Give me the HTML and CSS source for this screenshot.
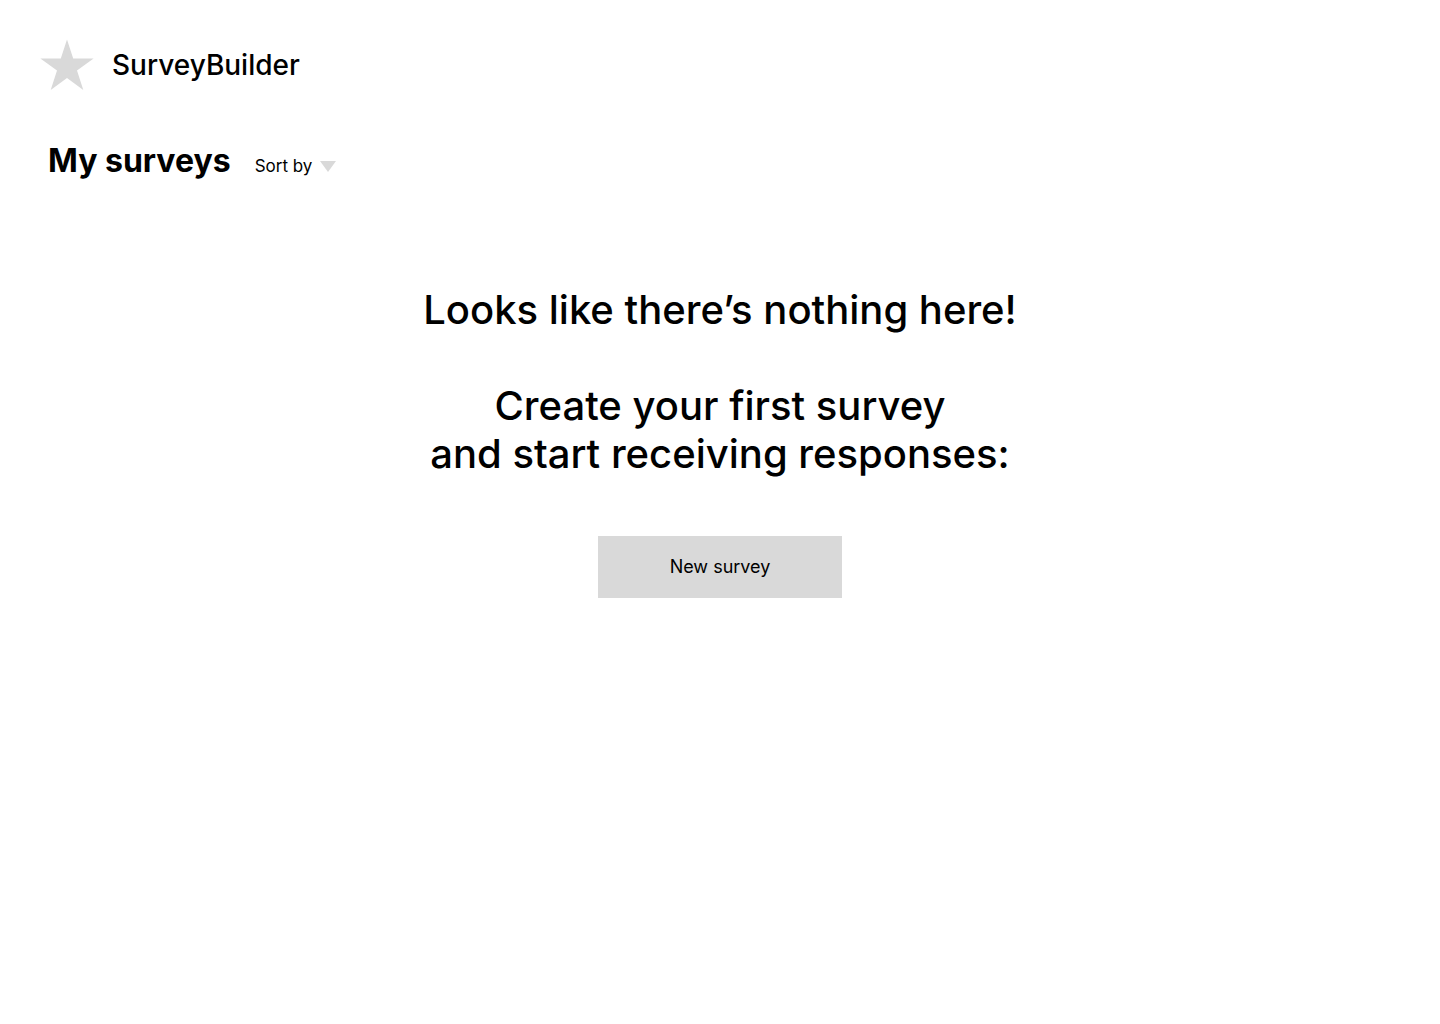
FILE: index.html
```html
<!DOCTYPE html>
<html lang="en">
<head>
<meta charset="utf-8">
<meta name="viewport" content="width=device-width, initial-scale=1">
<title>SurveyBuilder</title>
<link rel="stylesheet" href="styles.css">
</head>
<body>
<header class="site-header">
  <a class="brand" href="#">
    <svg class="brand-logo" viewBox="0 0 54 52" aria-hidden="true"><path d="M27 0.5L33.2 19.5H53.6L37 31.6L43.3 51L27 39L10.7 51L17 31.6L0.4 19.5H20.8Z"/></svg>
    <span>SurveyBuilder</span>
  </a>
</header>
<main>
  <div class="toolbar">
    <h1 class="title">My surveys</h1>
    <button class="sort" type="button">Sort by
      <svg class="sort-arrow" viewBox="0 0 16 11" aria-hidden="true"><path d="M0 0H16L8 11Z"/></svg>
    </button>
  </div>
  <section class="empty">
    <p class="message">Looks like there’s nothing here!</p>
    <p class="message">Create your first survey<br>and start receiving responses:</p>
    <button class="new-survey" type="button">New survey</button>
  </section>
</main>
</body>
</html>
```
FILE: styles.css
```css
* { box-sizing: border-box; }
body {
  margin: 0;
  background: #fff;
  color: #000;
  font-family: Inter, "Liberation Sans", sans-serif;
}
button {
  border: 0;
  padding: 0;
  background: none;
  color: inherit;
  font: inherit;
  cursor: pointer;
}
.site-header { padding: 39px 40px 0; }
.brand {
  display: inline-flex;
  align-items: center;
  gap: 18px;
  color: inherit;
  font-size: 28px;
  font-weight: 500;
  line-height: 52px;
  text-decoration: none;
}
.brand-logo { width: 54px; height: 52px; fill: #d9d9d9; }
.toolbar {
  display: flex;
  align-items: baseline;
  gap: 24px;
  padding: 46px 48px 0;
}
.title { margin: 0; font-size: 32px; font-weight: 700; line-height: 40px; }
.sort {
  display: inline-flex;
  align-items: center;
  gap: 8px;
  font-size: 17px;
  line-height: 20px;
}
.sort-arrow { width: 16px; height: 11px; fill: #d9d9d9; }
.empty {
  display: flex;
  flex-direction: column;
  align-items: center;
  gap: 48px;
  padding: 105px 24px 48px;
}
.message {
  margin: 0;
  font-size: 40px;
  font-weight: 500;
  line-height: 48px;
  text-align: center;
}
.new-survey {
  min-width: 244px;
  margin-top: 10px;
  padding: 20px 24px;
  background: #d9d9d9;
  font-size: 18px;
  line-height: 22px;
}
```
